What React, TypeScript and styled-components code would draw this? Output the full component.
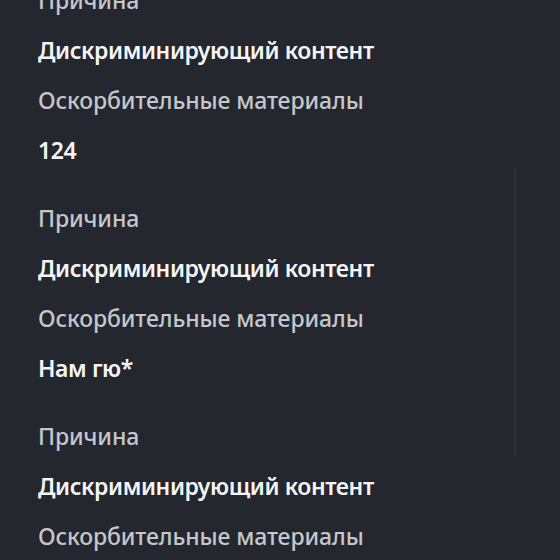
import React from "react";
import styled, { createGlobalStyle } from "styled-components";

const Global = createGlobalStyle`
  html, body {
    margin: 0;
    padding: 0;
    background: #25272e;
  }
  body {
    font-family: "Noto Sans", "Open Sans", sans-serif;
    overflow: hidden;
  }
`;

const Page = styled.div`
  position: relative;
  width: 560px;
  height: 560px;
  overflow: hidden;
  background: #25272e;
`;

const List = styled.div`
  display: flex;
  flex-direction: column;
  gap: 18px;
  margin-top: -25px;
  padding-left: 38px;
`;

const Group = styled.div`
  display: flex;
  flex-direction: column;
`;

const Row = styled.div<{ $strong?: boolean }>`
  height: 50px;
  line-height: 50px;
  font-size: 23px;
  white-space: nowrap;
  font-weight: ${(p) => (p.$strong ? 600 : 500)};
  letter-spacing: ${(p) => (p.$strong ? "-0.4px" : "-0.1px")};
  color: ${(p) => (p.$strong ? "#f4f5f7" : "#c4c7cd")};
`;

const ScrollThumb = styled.div`
  position: absolute;
  left: 514px;
  top: 168px;
  width: 2px;
  height: 288px;
  border-radius: 1px;
  background: #2f323a;
`;

const items = [
  { reason: "Дискриминирующий контент", detail: "Оскорбительные материалы", name: "124" },
  { reason: "Дискриминирующий контент", detail: "Оскорбительные материалы", name: "Нам гю*" },
  { reason: "Дискриминирующий контент", detail: "Оскорбительные материалы", name: "" },
];

export default function App() {
  return (
    <Page>
      <Global />
      <List>
        {items.map((it, i) => (
          <Group key={i}>
            <Row>Причина</Row>
            <Row $strong>{it.reason}</Row>
            <Row>{it.detail}</Row>
            {it.name && <Row $strong>{it.name}</Row>}
          </Group>
        ))}
      </List>
      <ScrollThumb />
    </Page>
  );
}
